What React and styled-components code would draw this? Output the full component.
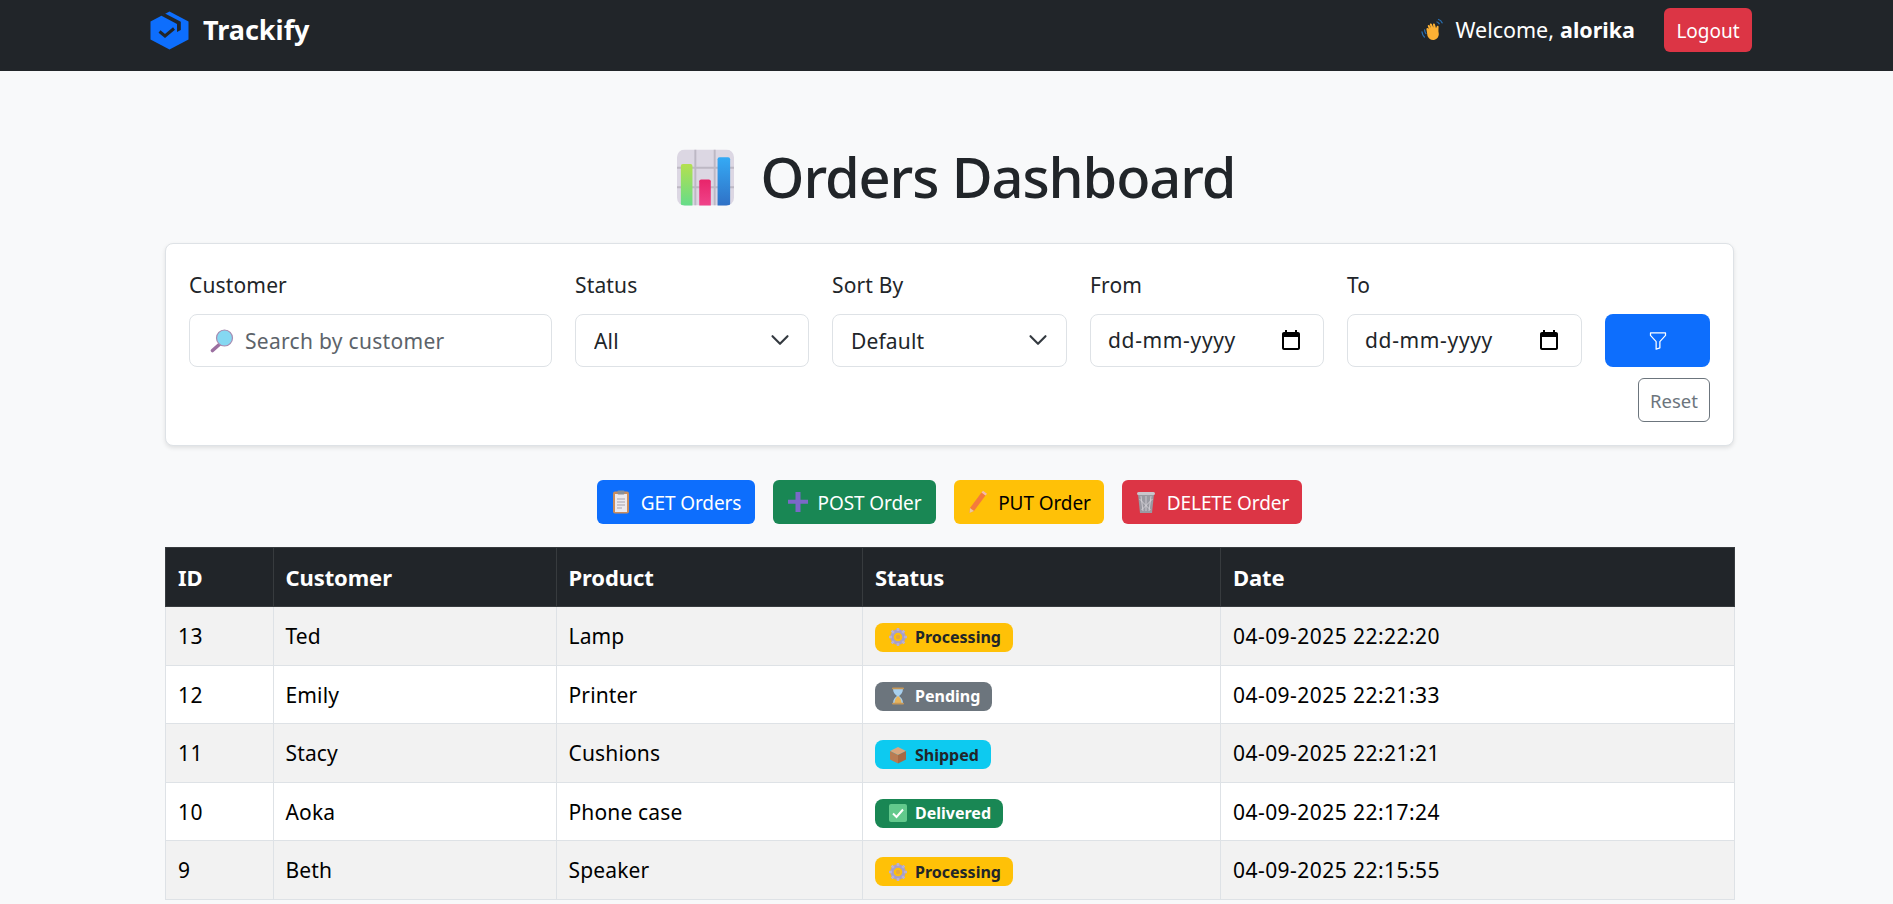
import React from "react";
import styled, { createGlobalStyle } from "styled-components";
import { BsFunnel } from "react-icons/bs";

const FONT = `"Noto Sans", "Open Sans", "Liberation Sans", sans-serif`;

const Global = createGlobalStyle`
  * { box-sizing: border-box; }
  html, body { margin: 0; height: 100%; overflow: hidden; background: #f8f9fa; }
  body { font-family: ${FONT}; font-size: 21px; line-height: 1.5; color: #212529; }
`;

const Nav = styled.header`
  height: 71px;
  background: #212529;
  display: flex;
  align-items: center;
  justify-content: space-between;
  padding: 0 141px 11px 150px;
`;
const Brand = styled.a`
  display: flex;
  align-items: center;
  gap: 14px;
  color: #fff;
  font-size: 27px;
  line-height: 40px;
  font-weight: 700;
`;
const NavRight = styled.div`
  display: flex;
  align-items: center;
  gap: 29px;
`;
const Welcome = styled.span`
  display: flex;
  align-items: center;
  gap: 10px;
  color: #fff;
  font-size: 21.5px;
  b { font-weight: 700; margin-left: -4px; }
`;
const LogoutButton = styled.button`
  width: 88px;
  height: 44px;
  background: #dc3545;
  color: #fff;
  border: 0;
  border-radius: 6px;
  font: 400 19px ${FONT};
  padding: 2px 0 0;
`;
const Main = styled.main`
  width: 1569px;
  margin-left: 165px;
`;
const Title = styled.h1`
  display: flex;
  justify-content: center;
  align-items: center;
  gap: 27px;
  margin: 0;
  padding: 71px 0 33px 13px;
  height: 172px;
  font-size: 56px;
  font-weight: 500;
  line-height: 69px;
  letter-spacing: -1.1px;
  color: #212529;
  svg { margin-top: 3px; }
`;
const FilterCard = styled.section`
  background: #fff;
  border: 1px solid #dee2e6;
  border-radius: 8px;
  box-shadow: 0 2px 4px rgba(0, 0, 0, 0.1);
  height: 203px;
  padding: 26px 23px 22px;
  display: grid;
  grid-template-columns:
    minmax(0, 363fr) minmax(0, 234fr) minmax(0, 235fr)
    minmax(0, 234fr) minmax(0, 235fr) minmax(0, 105fr);
  grid-template-rows: 30px 67px 55px;
  column-gap: 23px;
`;
const Field = styled.div`
  display: grid;
  grid-row: 1 / span 2;
  grid-template-rows: 30px 53px;
  row-gap: 14px;
  align-content: start;
`;
const Label = styled.label`
  font-size: 21px;
  line-height: 30px;
  letter-spacing: 0.15px;
  color: #212529;
`;
const InputBox = styled.div`
  display: flex;
  align-items: center;
  justify-content: space-between;
  height: 53px;
  padding: 0 20px 0 ${(p) => p.$pl || 17}px;
  background: #fff;
  border: 1px solid #dee2e6;
  border-radius: 8px;
  font-size: 21px;
  letter-spacing: 0.65px;
  color: #212529;
`;
const SearchInput = styled.input`
  flex: 1;
  min-width: 0;
  width: 100%;
  border: 0;
  outline: 0;
  padding: 0 0 0 11px;
  background: transparent;
  font: 400 21px ${FONT};
  letter-spacing: 0.3px;
  &::placeholder { color: #5c636a; opacity: 1; }
`;
const SelectEl = styled.select`
  appearance: none;
  width: 100%;
  height: 53px;
  padding: 0 40px 0 18px;
  background: #fff;
  border: 1px solid #dee2e6;
  border-radius: 8px;
  font: 400 21px ${FONT};
  letter-spacing: 0.15px;
  color: #212529;
`;
const SelectWrap = styled.div`
  position: relative;
  svg {
    position: absolute;
    right: 19px;
    top: 16px;
    pointer-events: none;
  }
`;
const FilterButton = styled.button`
  grid-column: 6;
  grid-row: 2;
  height: 53px;
  margin-top: 14px;
  align-self: start;
  background: #0d6efd;
  color: #fff;
  border: 0;
  border-radius: 8px;
  display: flex;
  align-items: center;
  justify-content: center;
`;
const ResetButton = styled.button`
  grid-column: 6;
  grid-row: 3;
  justify-self: end;
  align-self: end;
  width: 72px;
  height: 44px;
  background: transparent;
  color: #6c757d;
  border: 1px solid #6c757d;
  border-radius: 6px;
  font: 400 18.5px ${FONT};
  padding: 0;
`;
const Actions = styled.div`
  display: flex;
  justify-content: center;
  gap: 18px;
  margin: 34px 0 23px;
`;
const ActionButton = styled.button`
  display: flex;
  align-items: center;
  justify-content: center;
  gap: 10px;
  height: 44px;
  width: ${(p) => p.$w}px;
  padding: 1px 0 0;
  border: 0;
  border-radius: 6px;
  background: ${(p) => p.$bg};
  color: ${(p) => p.$fg};
  font: 400 19px ${FONT};
  letter-spacing: -0.1px;
  svg { margin-top: -1px; }
`;
const Table = styled.table`
  width: 100%;
  table-layout: fixed;
  border-collapse: collapse;
  color: #000;
`;
const Col = styled.col`
  width: ${(p) => p.$w}px;
`;
const Th = styled.th`
  height: 59px;
  padding: 0 12px;
  background: #212529;
  color: #fff;
  text-align: left;
  font-size: 22px;
  font-weight: 700;
  letter-spacing: -0.1px;
  border: 1px solid #373b3e;
`;
const Tr = styled.tr`
  background: ${(p) => (p.$odd ? "#f2f2f2" : "#fff")};
`;
const Td = styled.td`
  height: 58.6px;
  padding: 2px 12px 0;
  font-size: 21px;
  letter-spacing: ${(p) => (p.$digits ? "0.45px" : "0.15px")};
  border: 1px solid #dee2e6;
`;
const Badge = styled.span`
  display: inline-flex;
  align-items: center;
  gap: 8px;
  height: 29px;
  margin-top: -2px;
  padding: 0 12px 0 14px;
  vertical-align: middle;
  border-radius: 8px;
  background: ${(p) => p.$bg};
  color: ${(p) => p.$fg};
  font-size: 16px;
  font-weight: 700;
  letter-spacing: 0;
  svg { flex: 0 0 18px; }
`;
const Footer = styled.footer`
  height: 40px;
  margin-top: 4px;
  background: #212529;
`;

const Logo = () => (
  <svg width="39" height="39" viewBox="0 0 39 39">
    <path d="M19.5 .5 38.5 10.500v18l-19 10-19-10v-18z" fill="#0d6efd" />
    <path d="M11 4.500 27 13v8l3.800 -2V10.800L15 2.500z" fill="#212529" />
    <path d="M9.500 20.500 15 25 24 17.500" fill="none" stroke="#212529" strokeWidth="3" />
  </svg>
);

const Wave = () => (
  <svg width="24" height="24" viewBox="0 0 24 24">
    <path d="M1 14c.3 2.200 1.200 3.800 2.400 5M3.600 12c.1 1.500.5 2.600 1.300 3.600M17.500 1.500c1.600.5 2.900 1.700 3.600 3.300M16 4c1 .3 1.700 1 2.200 1.800" fill="none" stroke="#2a6fb0" strokeWidth="1.300" strokeLinecap="round" />
    <path d="M5.500 11.500c-.6-1 .8-2.200 1.700-1.300L8 11 6.800 8.300c-.5-1.200 1.200-2 1.800-.9l1.300 2.600-1-3.200c-.4-1.300 1.500-1.800 2-.6l1.500 3.600-.4-3.100c-.1-1.300 1.700-1.500 2-.3l1 3.800.7-1.800c.5-1 2-.6 1.900.5-.1 2-.3 4.400.1 6.200.6 3-1.300 6.400-4.700 6.900-3 .4-5-1.200-6.500-4z" fill="#fbb034" />
  </svg>
);

const BarChart = () => (
  <svg width="57" height="57" viewBox="0 0 59 58">
    <defs>
      <clipPath id="chartClip">
        <rect width="59" height="58" rx="8" />
      </clipPath>
      <linearGradient id="gbar" x1="0" y1="0" x2="0" y2="1">
        <stop offset="0" stopColor="#b4e04f" />
        <stop offset="1" stopColor="#62dc8c" />
      </linearGradient>
      <linearGradient id="pbar" x1="0" y1="0" x2="0" y2="1">
        <stop offset="0" stopColor="#e8246a" />
        <stop offset="1" stopColor="#f0468c" />
      </linearGradient>
      <linearGradient id="bbar" x1="0" y1="0" x2="0" y2="1">
        <stop offset="0" stopColor="#35aaf5" />
        <stop offset="1" stopColor="#2f6fc4" />
      </linearGradient>
    </defs>
    <g clipPath="url(#chartClip)">
      <rect width="59" height="58" fill="#dcd7e3" />
      <path d="M19 0v58M39 0v58M0 19h59M0 39h59" stroke="#bdb8c4" strokeWidth="2" />
      <rect x="4" y="15" width="12" height="45" rx="2" fill="url(#gbar)" />
      <rect x="23" y="31" width="12" height="29" rx="2" fill="url(#pbar)" />
      <rect x="42" y="8" width="13" height="52" rx="2" fill="url(#bbar)" />
    </g>
  </svg>
);

const Magnifier = () => (
  <svg width="24" height="24" viewBox="0 0 24 24">
    <path d="M11 14 2.500 21.500" stroke="#9b6fa0" strokeWidth="3.600" strokeLinecap="round" />
    <circle cx="14.500" cy="9" r="8" fill="#85d8f2" stroke="#a98bb0" strokeWidth="1.200" />
  </svg>
);

const Clipboard = () => (
  <svg width="20" height="24" viewBox="0 0 20 24">
    <rect x="2" y="1.500" width="16" height="22" rx="2" fill="#c98d5e" />
    <rect x="4" y="4" width="12" height="18" fill="#ece9ee" />
    <rect x="6.500" y=".5" width="7" height="4" rx="1" fill="#8a8f98" />
    <path d="M6 9h8M6 12h8M6 15h8M6 18h5" stroke="#a6a3ad" strokeWidth="1" />
  </svg>
);

const Plus = () => (
  <svg width="20" height="22" viewBox="0 0 20 22">
    <path d="M7.500 1h5v7.800H20v4h-7.500V21h-5v-8.200H0v-4h7.500z" fill="#7b68c8" />
  </svg>
);

const Pencil = () => (
  <svg width="21" height="24" viewBox="0 0 21 24">
    <path d="M14.500 2.500 18.500 5.500 7 21 2.500 23 3 18z" fill="#f47a3c" />
    <path d="M14.500 2.500 16 .8 20 3.800 18.500 5.500z" fill="#f4b8b0" />
    <path d="M3 18 7 21 2.500 23z" fill="#e8c9a0" />
  </svg>
);

const Trash = () => (
  <svg width="22" height="24" viewBox="0 0 22 24">
    <path d="M3 4h16l-2 19H5z" fill="#9a9aa2" />
    <path d="M6 6 8 21M11 6v15M16 6l-2 15M4.500 9l11 11M17.500 9l-11 11" stroke="#d9d6dc" strokeWidth=".8" />
    <rect x="2" y="2" width="18" height="3" rx="1.500" fill="#c9c6cc" />
  </svg>
);

const Gear = () => (
  <svg width="18" height="18" viewBox="0 0 18 18">
    <circle cx="9" cy="9" r="6" fill="none" stroke="#a89fc9" strokeWidth="3.400" />
    <path d="M9 0v3M9 15v3M0 9h3M15 9h3M2.600 2.600l2.200 2.200M13.200 13.200l2.200 2.200M2.600 15.400l2.200-2.200M13.200 4.800l2.200-2.200" stroke="#b8b0d6" strokeWidth="2.600" />
    <circle cx="9" cy="9" r="2.200" fill="#e8a83a" />
  </svg>
);

const Hourglass = () => (
  <svg width="18" height="18" viewBox="-2 0 18 18">
    <path d="M2 1.500h10c0 4-2 6-4 7.500 2 1.500 4 3.500 4 7.500H2c0-4 2-6 4-7.500-2-1.500-4-3.500-4-7.500z" fill="#a8d0ee" />
    <path d="M7 9c-2 1.500-3.500 3.500-3.500 7h7C10.500 12.500 9 10.500 7 9z" fill="#e8b45a" />
    <rect x="1" y=".5" width="12" height="1.800" rx=".9" fill="#c69858" />
    <rect x="1" y="15.700" width="12" height="1.800" rx=".9" fill="#c69858" />
  </svg>
);

const Box = () => (
  <svg width="18" height="18" viewBox="0 0 18 18">
    <path d="M9 1 17 5 9 9 1 5z" fill="#dba67c" />
    <path d="M1 5 9 9v8.500L1 13.500z" fill="#b97b52" />
    <path d="M17 5 9 9v8.500l8-4z" fill="#a66a44" />
  </svg>
);

const Check = () => (
  <svg width="18" height="18" viewBox="0 0 18 18">
    <rect width="18" height="18" rx="2" fill="#62c98c" />
    <path d="M4 9.500 7.500 13 14 5.500" fill="none" stroke="#fff" strokeWidth="2" />
  </svg>
);

const Calendar = () => (
  <svg width="24" height="24" viewBox="0 0 24 24">
    <path d="M19 3h-1V1h-2v2H8V1H6v2H5C3.900 3 3 3.900 3 5v14c0 1.100.9 2 2 2h14c1.100 0 2-.9 2-2V5c0-1.100-.9-2-2-2zm0 16H5V8h14v11z" fill="#000" />
  </svg>
);

const Chevron = () => (
  <svg width="20" height="20" viewBox="0 0 16 16">
    <path d="m2 5 6 6 6-6" fill="none" stroke="#343a40" strokeWidth="1.700" strokeLinecap="round" strokeLinejoin="round" />
  </svg>
);

const STATUS = {
  Processing: { bg: "#ffc107", fg: "#212529", icon: <Gear /> },
  Pending: { bg: "#6c757d", fg: "#fff", icon: <Hourglass /> },
  Shipped: { bg: "#0dcaf0", fg: "#212529", icon: <Box /> },
  Delivered: { bg: "#198754", fg: "#fff", icon: <Check /> },
};

const ROWS = [
  [13, "Ted", "Lamp", "Processing", "04-09-2025 22:22:20"],
  [12, "Emily", "Printer", "Pending", "04-09-2025 22:21:33"],
  [11, "Stacy", "Cushions", "Shipped", "04-09-2025 22:21:21"],
  [10, "Aoka", "Phone case", "Delivered", "04-09-2025 22:17:24"],
  [9, "Beth", "Speaker", "Processing", "04-09-2025 22:15:55"],
];

export default function App() {
  return (
    <>
      <Global />
      <Nav>
        <Brand><Logo />Trackify</Brand>
        <NavRight>
          <Welcome><Wave />Welcome, <b>alorika</b></Welcome>
          <LogoutButton>Logout</LogoutButton>
        </NavRight>
      </Nav>
      <Main>
        <Title><BarChart />Orders Dashboard</Title>
        <FilterCard>
          <Field>
            <Label>Customer</Label>
            <InputBox $pl={20}>
              <Magnifier />
              <SearchInput placeholder="Search by customer" />
            </InputBox>
          </Field>
          <Field>
            <Label>Status</Label>
            <SelectWrap>
              <SelectEl defaultValue="All"><option>All</option></SelectEl>
              <Chevron />
            </SelectWrap>
          </Field>
          <Field>
            <Label>Sort By</Label>
            <SelectWrap>
              <SelectEl defaultValue="Default"><option>Default</option></SelectEl>
              <Chevron />
            </SelectWrap>
          </Field>
          <Field>
            <Label>From</Label>
            <InputBox>dd-mm-yyyy<Calendar /></InputBox>
          </Field>
          <Field>
            <Label>To</Label>
            <InputBox>dd-mm-yyyy<Calendar /></InputBox>
          </Field>
          <FilterButton><BsFunnel size={20} /></FilterButton>
          <ResetButton>Reset</ResetButton>
        </FilterCard>
        <Actions>
          <ActionButton $w={158} $bg="#0d6efd" $fg="#fff"><Clipboard />GET Orders</ActionButton>
          <ActionButton $w={163} $bg="#198754" $fg="#fff"><Plus />POST Order</ActionButton>
          <ActionButton $w={150} $bg="#ffc107" $fg="#000"><Pencil />PUT Order</ActionButton>
          <ActionButton $w={180} $bg="#dc3545" $fg="#fff"><Trash />DELETE Order</ActionButton>
        </Actions>
        <Table>
          <colgroup>
            <Col $w={107.5} />
            <Col $w={283} />
            <Col $w={306.5} />
            <Col $w={358} />
            <Col $w={514} />
          </colgroup>
          <thead>
            <tr>
              <Th>ID</Th><Th>Customer</Th><Th>Product</Th><Th>Status</Th><Th>Date</Th>
            </tr>
          </thead>
          <tbody>
            {ROWS.map(([id, customer, product, status, date], i) => (
              <Tr key={id} $odd={i % 2 === 0}>
                <Td $digits>{id}</Td>
                <Td>{customer}</Td>
                <Td>{product}</Td>
                <Td>
                  <Badge $bg={STATUS[status].bg} $fg={STATUS[status].fg}>
                    {STATUS[status].icon}{status}
                  </Badge>
                </Td>
                <Td $digits>{date}</Td>
              </Tr>
            ))}
          </tbody>
        </Table>
      </Main>
      <Footer />
    </>
  );
}
